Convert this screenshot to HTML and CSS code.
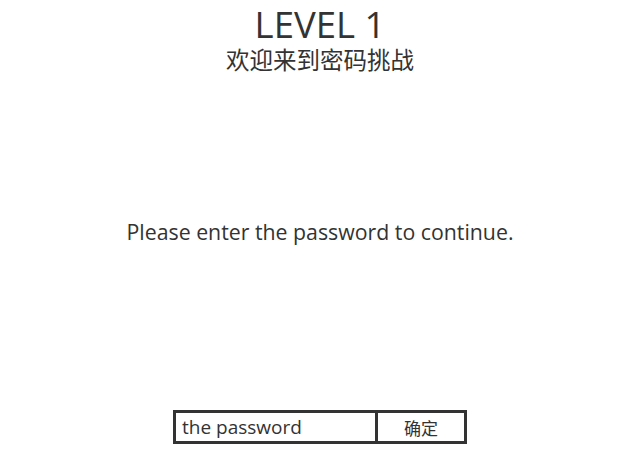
FILE: index.html
```html
<!DOCTYPE html>
<html lang="zh">
<head>
<meta charset="utf-8">
<link rel="stylesheet" href="styles.css">
</head>
<body>
<div class="page">
  <header class="head">
    <h1 class="title">LEVEL 1</h1>
    <h2 class="subtitle">欢迎来到密码挑战</h2>
  </header>
  <p class="prompt">Please enter the password to continue.</p>
  <form class="form">
    <input class="field" type="text" value="the password">
    <button class="submit" type="button">确定</button>
  </form>
</div>
</body>
</html>
```
FILE: styles.css
```css
html, body {
  margin: 0;
  padding: 0;
  background: #fff;
}
body {
  width: 640px;
  height: 465px;
  overflow: hidden;
  font-family: "Open Sans", "Noto Sans CJK SC", sans-serif;
  color: #333;
}
.page {
  display: flex;
  flex-direction: column;
  align-items: center;
  height: 465px;
}
.head {
  display: flex;
  flex-direction: column;
  align-items: center;
  padding-top: 2px;
}
.title {
  margin: 0;
  font-size: 36.5px;
  font-weight: 400;
  line-height: 44px;
}
.subtitle {
  margin: 0;
  font-size: 23.5px;
  font-weight: 400;
  line-height: 28px;
}
.prompt {
  margin: 143px 0 0;
  font-size: 21.3px;
  line-height: 30px;
}
.form {
  display: flex;
  margin: 163px 0 0;
}
.field {
  box-sizing: border-box;
  width: 205px;
  height: 34px;
  border: 3px solid #333;
  padding: 0 0 0 6px;
  font-family: "Open Sans", sans-serif;
  font-size: 19px;
  color: #333;
  outline: none;
}
.submit {
  box-sizing: border-box;
  width: 89px;
  height: 34px;
  border: 3px solid #333;
  border-left: 0;
  background: #fff;
  font-family: "Noto Sans CJK SC", sans-serif;
  font-size: 17px;
  color: #333;
  padding: 0;
}
```
